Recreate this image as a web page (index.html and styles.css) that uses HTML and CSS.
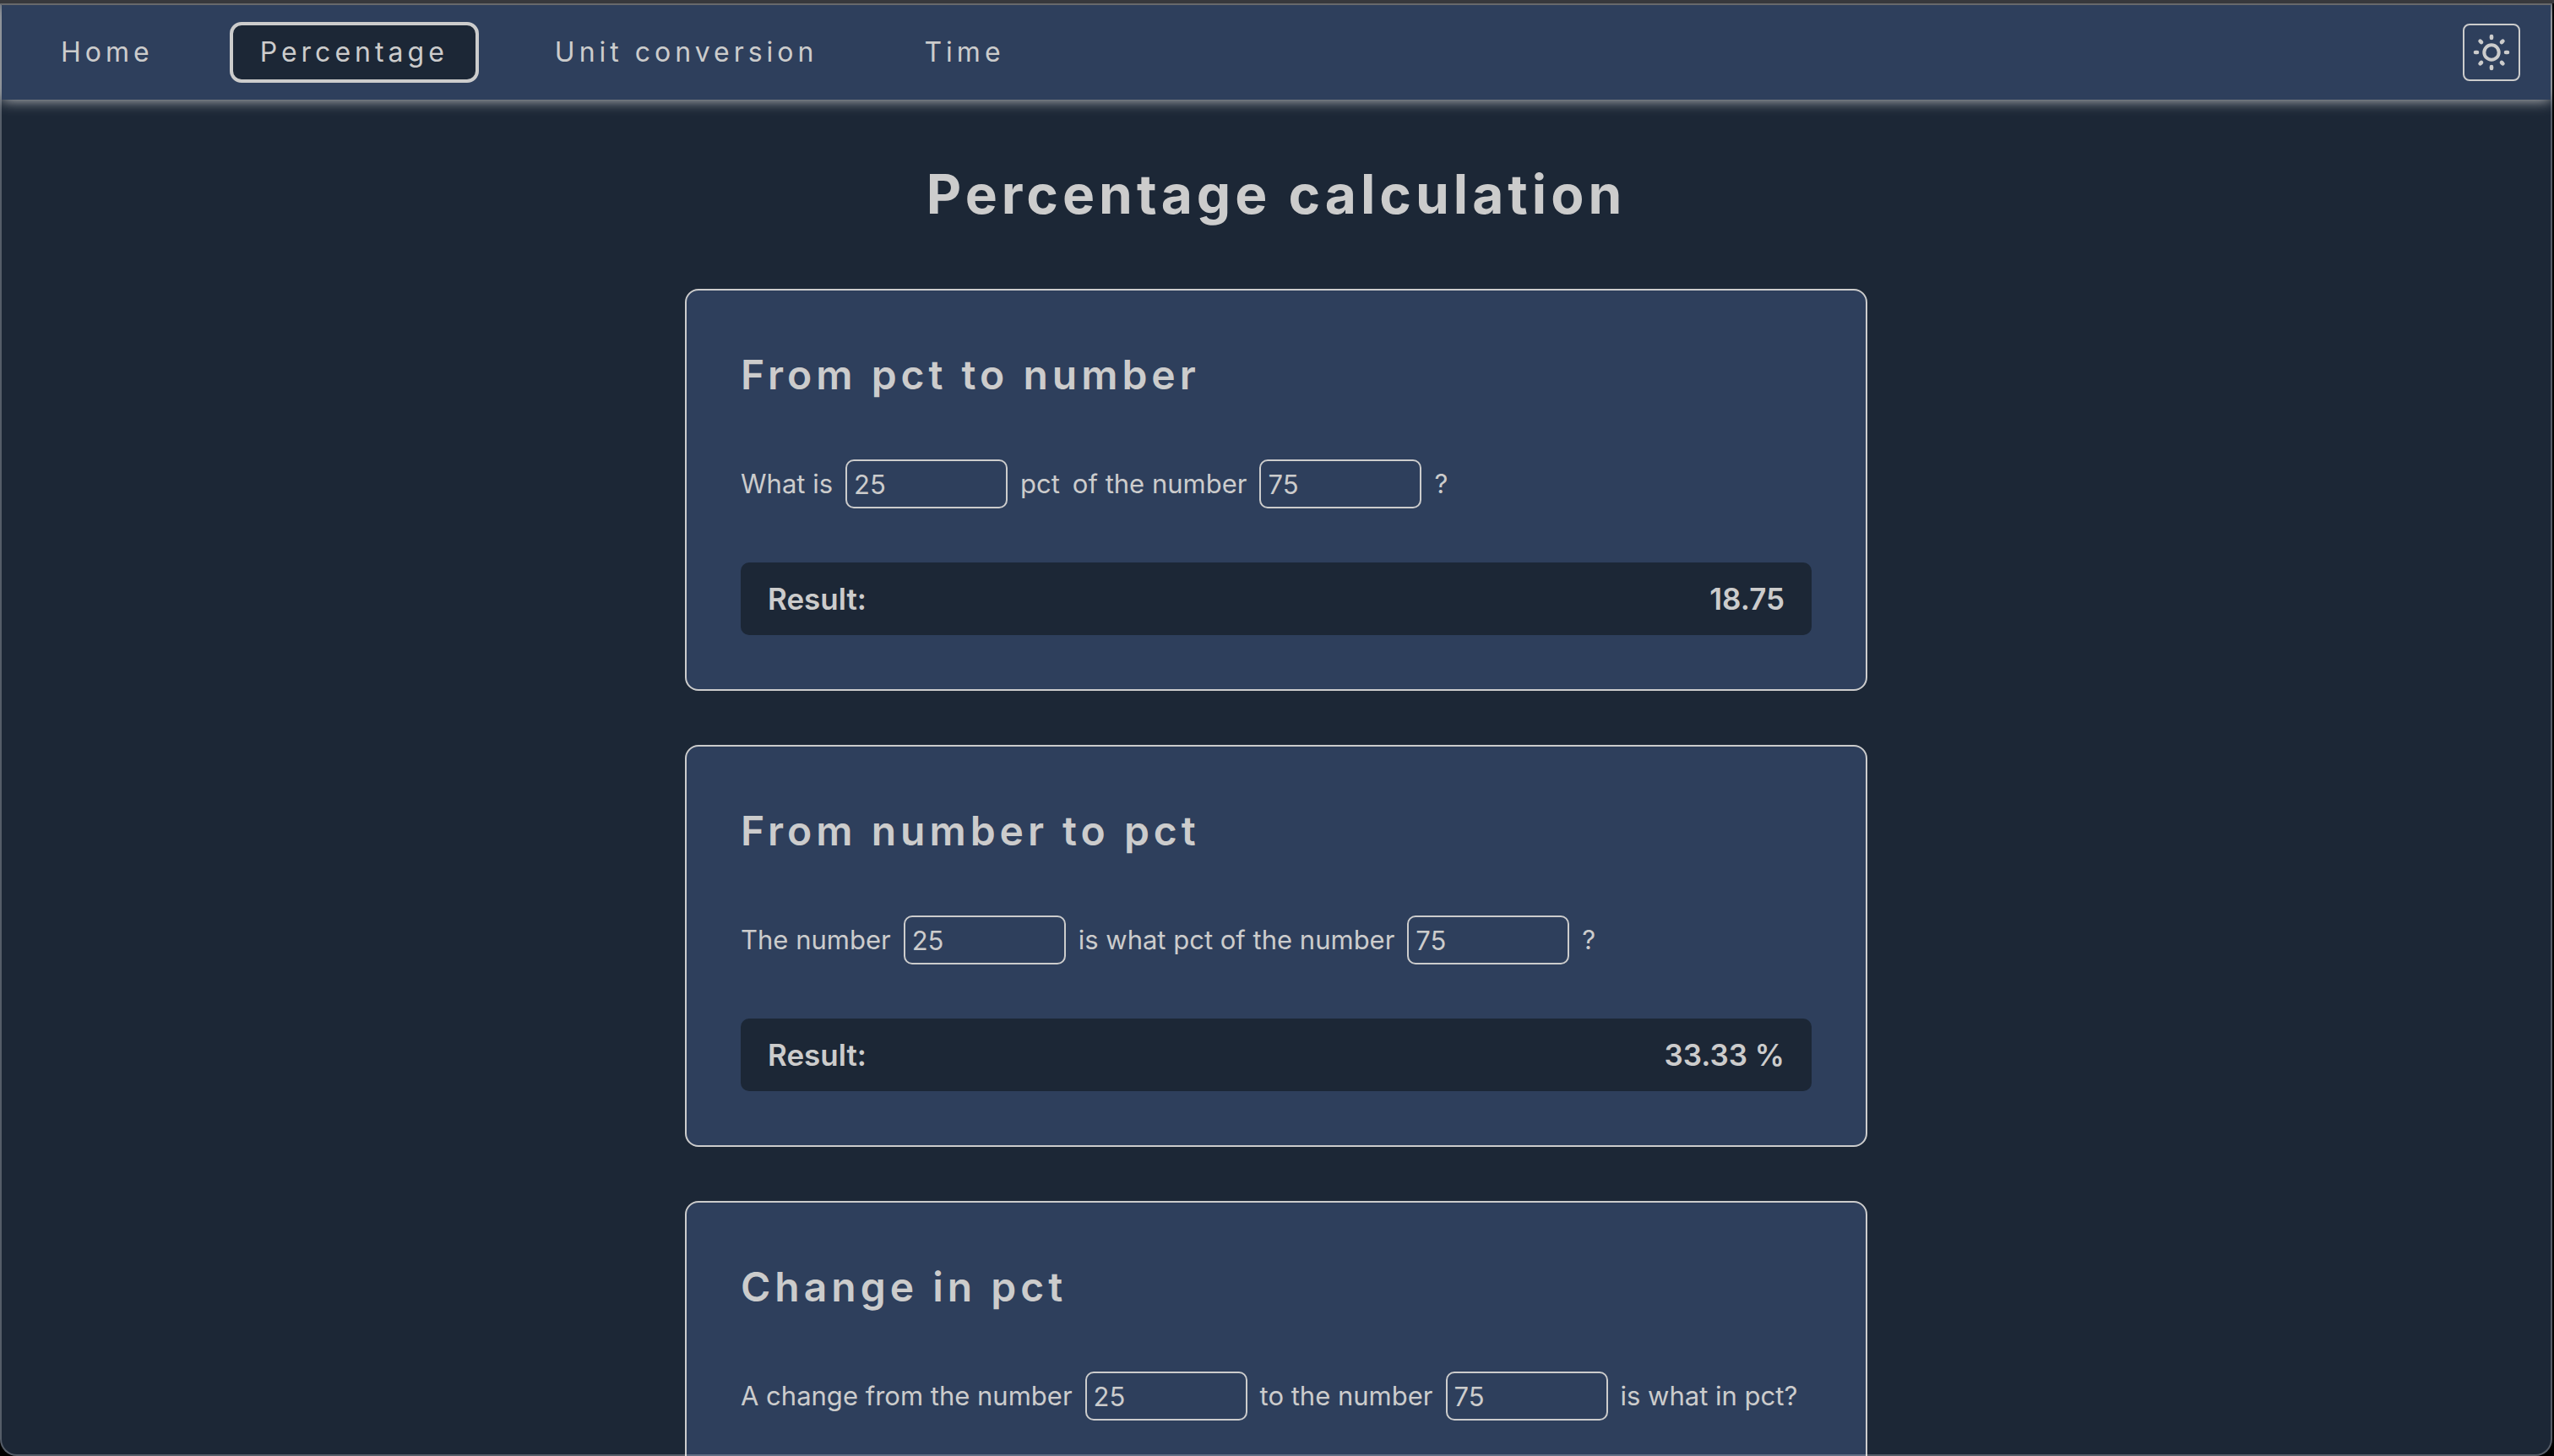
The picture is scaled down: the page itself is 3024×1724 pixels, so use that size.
FILE: index.html
```html
<!DOCTYPE html>
<html lang="en">
<head>
  <meta charset="utf-8">
  <meta name="viewport" content="width=device-width, initial-scale=1">
  <title>Percentage calculation</title>
  <link rel="stylesheet" href="styles.css">
</head>
<body>
  <div class="window">
    <header class="topbar">
      <nav class="nav">
        <a class="nav-link" href="#home">Home</a>
        <a class="nav-link nav-link-active" href="#percentage" aria-current="page">Percentage</a>
        <a class="nav-link" href="#units">Unit conversion</a>
        <a class="nav-link" href="#time">Time</a>
      </nav>
      <button class="theme-toggle" type="button" aria-label="Toggle theme">
        <svg class="sun" viewBox="0 0 48 48" aria-hidden="true">
          <circle cx="24" cy="24" r="8.7"/>
          <path class="sun-rays" d="M24 5v2M24 41v2M5 24h2M41 24h2M10.6 10.6l1.4 1.4M36 36l1.4 1.4M10.6 37.4l1.4-1.4M36 12l1.4-1.4"/>
        </svg>
      </button>
    </header>

    <main class="page">
      <h1 class="page-title">Percentage calculation</h1>

      <section class="card">
        <h2 class="card-title">From pct to number</h2>
        <form class="sentence">
          <label for="part-pct">What is</label>
          <input class="number" id="part-pct" type="text" inputmode="decimal" value="25">
          <span>pct</span>
          <label for="part-total">of the number</label>
          <input class="number" id="part-total" type="text" inputmode="decimal" value="75">
          <span>?</span>
        </form>
        <div class="result"><span>Result:</span><output for="part-pct part-total">18.75</output></div>
      </section>

      <section class="card">
        <h2 class="card-title">From number to pct</h2>
        <form class="sentence">
          <label for="ratio-part">The number</label>
          <input class="number" id="ratio-part" type="text" inputmode="decimal" value="25">
          <label for="ratio-total">is what pct of the number</label>
          <input class="number" id="ratio-total" type="text" inputmode="decimal" value="75">
          <span>?</span>
        </form>
        <div class="result"><span>Result:</span><output for="ratio-part ratio-total">33.33 %</output></div>
      </section>

      <section class="card">
        <h2 class="card-title">Change in pct</h2>
        <form class="sentence">
          <label for="change-from">A change from the number</label>
          <input class="number" id="change-from" type="text" inputmode="decimal" value="25">
          <label for="change-to">to the number</label>
          <input class="number" id="change-to" type="text" inputmode="decimal" value="75">
          <span>is what in pct?</span>
        </form>
      </section>
    </main>
  </div>
</body>
</html>
```

FILE: styles.css
```css
:root {
  --ink: #cccccc;
  --surface: #2e3f5c;
  --base: #1c2736;
}

* {
  box-sizing: border-box;
}

html {
  background: #000;
}

body {
  height: 100vh;
  margin: 0;
  padding-right: 2px;
  border-top: 4px solid #37383c;
  overflow: hidden;
  background: #000;
  color: var(--ink);
  font-family: Inter, "Liberation Sans", sans-serif;
  font-size: 31px;
  line-height: 48px;
}

.window {
  height: 100%;
  padding: 2px 2px 0;
  border-radius: 0 0 20px 20px;
  overflow: hidden auto;
  scrollbar-width: none;
  background: var(--base);
}

/* Thin translucent outline drawn over the window's contents */
.window::after {
  content: "";
  position: fixed;
  inset: 4px 2px 0 0;
  border: 2px solid rgba(255, 255, 255, 0.25);
  border-top-color: #67686b;
  border-radius: 0 0 20px 20px;
  pointer-events: none;
}

.topbar {
  display: flex;
  align-items: center;
  justify-content: space-between;
  padding: 20px 36px 20px 34px;
  background: var(--surface);
  box-shadow: 0 0 16px var(--ink);
}

.nav {
  display: flex;
  gap: 54px;
}

.nav-link {
  padding: 8px 32px;
  border: 4px solid transparent;
  border-radius: 14px;
  color: inherit;
  font-size: 32px;
  letter-spacing: 5px;
  text-decoration: none;
}

.nav-link-active {
  border-color: var(--ink);
  background: var(--base);
}

.theme-toggle {
  display: grid;
  place-items: center;
  width: 68px;
  height: 68px;
  padding: 0;
  border: 2px solid var(--ink);
  border-radius: 8px;
  background: transparent;
  color: inherit;
}

.sun {
  width: 48px;
  height: 48px;
  fill: none;
  stroke: currentColor;
  stroke-width: 4;
  stroke-linecap: round;
}

.sun-rays {
  stroke-width: 4.6;
}

.page {
  display: flex;
  flex-direction: column;
  gap: 64px;
  width: 100%;
  max-width: 1400px;
  margin: 0 auto;
  padding: 64px 0;
}

.page-title {
  margin: 0;
  font-size: 64px;
  font-weight: 700;
  line-height: 96px;
  letter-spacing: 5px;
  text-align: center;
}

.card {
  display: flex;
  flex-direction: column;
  gap: 64px;
  padding: 64px;
  border: 2px solid var(--ink);
  border-radius: 16px;
  background: var(--surface);
}

.card-title {
  margin: 0;
  font-size: 48px;
  font-weight: 600;
  line-height: 72px;
  letter-spacing: 5px;
}

.sentence {
  display: flex;
  align-items: center;
  gap: 15px;
}

.number {
  width: 192px;
  height: 58px;
  padding: 0 8px;
  border: 2px solid var(--ink);
  border-radius: 10px;
  background: transparent;
  color: inherit;
  font: inherit;
}

.result {
  display: flex;
  justify-content: space-between;
  padding: 16px 32px;
  border-radius: 10px;
  background: var(--base);
  font-size: 35px;
  font-weight: 600;
  line-height: 54px;
}
```
